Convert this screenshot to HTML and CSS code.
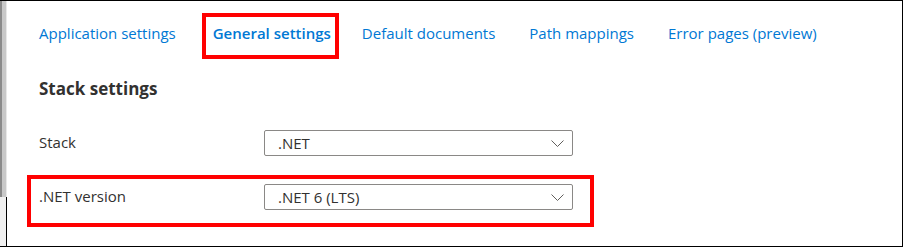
FILE: index.html
```html
<!DOCTYPE html>
<html lang="en">
<head>
<meta charset="utf-8">
<title>General settings</title>
<link rel="stylesheet" href="styles.css">
</head>
<body>
<div class="window">
  <div class="scrollbar"><div class="thumb"></div></div>
  <div class="content">
    <nav class="tabs">
      <a class="tab">Application settings</a>
      <a class="tab active">General settings</a>
      <a class="tab">Default documents</a>
      <a class="tab">Path mappings</a>
      <a class="tab">Error pages (preview)</a>
    </nav>
    <h2 class="section-title">Stack settings</h2>
    <div class="field">
      <label class="field-label">Stack</label>
      <div class="dropdown">
        <span class="dropdown-value">.NET</span>
        <svg class="chevron" width="13" height="7" viewBox="0 0 13 7"><polyline points="0.5,0.5 6.5,6.5 12.5,0.5" fill="none" stroke="#605e5c" stroke-width="1"/></svg>
      </div>
    </div>
    <div class="field highlight">
      <label class="field-label">.NET version</label>
      <div class="dropdown">
        <span class="dropdown-value">.NET 6 (LTS)</span>
        <svg class="chevron" width="13" height="7" viewBox="0 0 13 7"><polyline points="0.5,0.5 6.5,6.5 12.5,0.5" fill="none" stroke="#605e5c" stroke-width="1"/></svg>
      </div>
    </div>
  </div>
</div>
</body>
</html>
```

FILE: styles.css
```css
html, body {
  margin: 0;
  padding: 0;
  background: #fff;
}

body {
  width: 904px;
  height: 248px;
  font-family: "Open Sans", "Noto Sans", sans-serif;
  color: #323130;
}

.window {
  width: 903px;
  height: 247px;
  box-sizing: border-box;
  border-top: 1px solid #000;
  border-right: 1px solid #000;
  border-bottom: 1px solid #000;
  display: flex;
}

.scrollbar {
  width: 7px;
  flex: none;
  background: linear-gradient(to right, #f0f0f0 0 6px, #000 6px 7px);
}

.thumb {
  height: 196px;
  background: linear-gradient(to right, #8a8a8a 0 2px, #c8c8c8 2px 6px, #e8e8e8 6px 7px);
}

.content {
  flex: 1;
  padding-left: 20px;
}

.tabs {
  display: flex;
  margin: 12px 0 0 1px;
  gap: 12px;
}

.tab {
  font-size: 15px;
  line-height: 20px;
  color: #0078d4;
  padding: 6px 7px 12px 7px;
  border: 4px solid transparent;
  white-space: nowrap;
}

.tab.active {
  font-weight: 600;
  margin-left: 3px;
  padding-right: 4px;
  border-color: #ff0000;
}

.section-title {
  margin: 18px 0 0 12px;
  font-size: 17px;
  line-height: 24px;
  font-weight: 700;
  color: #323130;
}

.field {
  width: 567px;
  box-sizing: border-box;
  display: flex;
  align-items: center;
  padding: 5px 17px 13px 8px;
  border: 4px solid transparent;
}

.section-title + .field {
  margin-top: 20px;
}

.field + .field {
  margin-top: 2px;
}

.field.highlight {
  border-color: #ff0000;
}

.field-label {
  width: 225px;
  flex: none;
  font-size: 15px;
  line-height: 20px;
  margin-top: -2px;
  color: #323130;
}

.dropdown {
  width: 309px;
  height: 26px;
  box-sizing: border-box;
  border: 1px solid #8a8886;
  border-radius: 2px;
  display: flex;
  align-items: center;
  justify-content: space-between;
  padding: 0 8px 0 13px;
}

.dropdown-value {
  font-size: 15px;
  line-height: 20px;
  color: #323130;
}

.chevron {
  display: block;
}
```
